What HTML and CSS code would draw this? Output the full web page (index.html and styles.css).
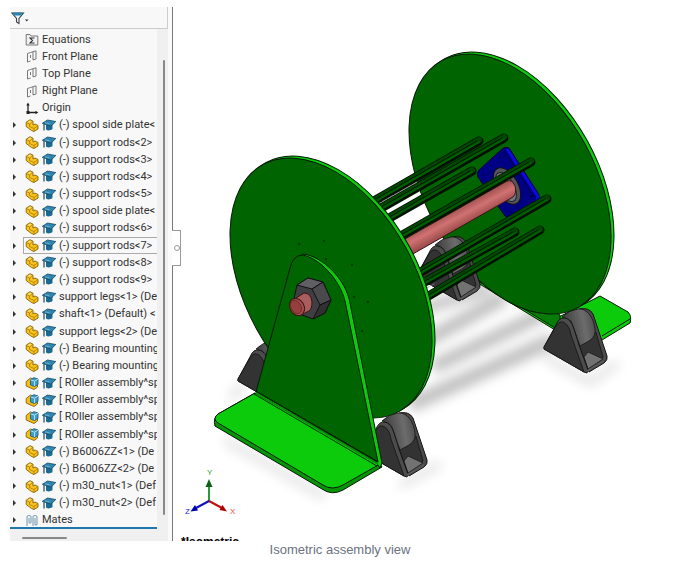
FILE: index.html
```html
<!DOCTYPE html>
<html lang="en">
<head>
<meta charset="utf-8">
<title>Isometric assembly view</title>
<link rel="stylesheet" href="styles.css">
</head>
<body>
<svg class="defs" aria-hidden="true">
  <symbol id="part" viewBox="0 0 13 13">
    <path d="M.7 3.200 4.500.7 7.500 2.200V6L9.500 5 12.500 6.500V10L8.500 12.500 6 11.500.7 7.500Z" fill="#f8c41c" stroke="#85610a" stroke-width=".9" stroke-linejoin="round"/>
    <path d="M1 3.500 4 5V7.500L8.500 9.500 12 7M8.500 9.500V12M4 5 7 2.500" fill="none" stroke="#a97a08" stroke-width=".8"/>
    <path d="M2 3.200 4.500 1.500 6.300 2.400 4 4Z" fill="#ffe066"/>
  </symbol>
  <symbol id="asm" viewBox="0 0 13 13">
    <path d="M.7 4.500 5 1 12 4v6L8.500 12.500.7 9Z" fill="#f5bd16" stroke="#85610a" stroke-width=".9" stroke-linejoin="round"/>
    <path d="M5 2.500 8.500.7 12.500 2V7.500L9 9.500 5 8Z" fill="#3e9cc6" stroke="#1b6285" stroke-width=".9"/>
    <path d="M5 2.800 9 4.200 12.500 2.200M9 4.500V9" fill="none" stroke="#d3f0fb" stroke-width=".8"/>
  </symbol>
  <symbol id="cap" viewBox="0 0 14 13">
    <path d="M4 5v5.500c2 1.500 4 1.200 6.500-.5V5Z" fill="#1d6a90"/>
    <path d="M.3 4.300 5.500 1 13.800 2.500 9 7.200Z" fill="#2f86b0" stroke="#154a64" stroke-width=".8"/>
    <path d="M2 4.800V11.500" stroke="#154a64" stroke-width="1.200"/>
    <path d="M3 3.800 7.500 4.800" stroke="#8fc7e0" stroke-width=".7"/>
  </symbol>
  <symbol id="plane" viewBox="0 0 13 13">
    <path d="M2 3.500 5 2.500M2 3.500V12L5 11M5 5V8M5 2.500 10.500.8V9L7.500 10V2" fill="none" stroke="#777" stroke-width="1"/>
  </symbol>
  <symbol id="sigma" viewBox="0 0 13 13">
    <path d="M.7 12V1.500H4.500L5.500 3H12.300V12Z" fill="#f2f2f2" stroke="#777"/>
    <path d="M9 5H4.500L7 7.500 4.500 10H9" fill="none" stroke="#333" stroke-width="1.100"/>
  </symbol>
  <symbol id="origin" viewBox="0 0 13 13">
    <path d="M2.500 2V10.500H11" fill="none" stroke="#222" stroke-width="1.300"/>
    <path d="M.8 3.500 2.500.5 4.200 3.500ZM10 8.800 12.800 10.500 10 12.200ZM1 9H4V12H1Z" fill="#222"/>
  </symbol>
  <symbol id="clips" viewBox="0 0 13 13">
    <path d="M1.500 12V3.500a2 2 0 0 1 4 0V8a1 1 0 0 1-2 0V4M7.500 12V3.500a2 2 0 0 1 4 0V10a1 1 0 0 1-2 0V4" fill="none" stroke="#7d9fb3" stroke-width="1.100"/>
  </symbol>
</svg>
<figure class="figure">
  <div class="window">
    <aside class="panel">
      <div class="filterbar">
        <button class="filter" aria-label="Filter">
          <svg viewBox="0 0 18 14" width="18" height="14"><path d="M1 2H12.500L8 7.500V12.500L5.500 11V7.500Z" fill="#e9f3f8" stroke="#444" stroke-width="1.100"/><path d="M1.500 1.500H12L10.500 4.500H3Z" fill="#2b83ae"/><path d="M14 8.500h3.500l-1.750 2z" fill="#333"/></svg>
        </button>
      </div>
      <div class="body">
        <ul class="tree">
          <li><i></i><svg><use href="#sigma"/></svg><span>Equations</span></li>
          <li><i></i><svg><use href="#plane"/></svg><span>Front Plane</span></li>
          <li><i></i><svg><use href="#plane"/></svg><span>Top Plane</span></li>
          <li><i></i><svg><use href="#plane"/></svg><span>Right Plane</span></li>
          <li><i></i><svg><use href="#origin"/></svg><span>Origin</span></li>
          <li><button aria-label="Expand"></button><svg><use href="#part"/></svg><svg><use href="#cap"/></svg><span>(-) spool side plate&lt;</span></li>
          <li><button aria-label="Expand"></button><svg><use href="#part"/></svg><svg><use href="#cap"/></svg><span>(-) support rods&lt;2&gt;</span></li>
          <li><button aria-label="Expand"></button><svg><use href="#part"/></svg><svg><use href="#cap"/></svg><span>(-) support rods&lt;3&gt;</span></li>
          <li><button aria-label="Expand"></button><svg><use href="#part"/></svg><svg><use href="#cap"/></svg><span>(-) support rods&lt;4&gt;</span></li>
          <li><button aria-label="Expand"></button><svg><use href="#part"/></svg><svg><use href="#cap"/></svg><span>(-) support rods&lt;5&gt;</span></li>
          <li><button aria-label="Expand"></button><svg><use href="#part"/></svg><svg><use href="#cap"/></svg><span>(-) spool side plate&lt;</span></li>
          <li><button aria-label="Expand"></button><svg><use href="#part"/></svg><svg><use href="#cap"/></svg><span>(-) support rods&lt;6&gt;</span></li>
          <li class="selected"><button aria-label="Expand"></button><svg><use href="#part"/></svg><svg><use href="#cap"/></svg><span>(-) support rods&lt;7&gt;</span></li>
          <li><button aria-label="Expand"></button><svg><use href="#part"/></svg><svg><use href="#cap"/></svg><span>(-) support rods&lt;8&gt;</span></li>
          <li><button aria-label="Expand"></button><svg><use href="#part"/></svg><svg><use href="#cap"/></svg><span>(-) support rods&lt;9&gt;</span></li>
          <li><button aria-label="Expand"></button><svg><use href="#part"/></svg><svg><use href="#cap"/></svg><span>support legs&lt;1&gt; (De</span></li>
          <li><button aria-label="Expand"></button><svg><use href="#part"/></svg><svg><use href="#cap"/></svg><span>shaft&lt;1&gt; (Default) &lt;</span></li>
          <li><button aria-label="Expand"></button><svg><use href="#part"/></svg><svg><use href="#cap"/></svg><span>support legs&lt;2&gt; (De</span></li>
          <li><button aria-label="Expand"></button><svg><use href="#part"/></svg><svg><use href="#cap"/></svg><span>(-) Bearing mounting</span></li>
          <li><button aria-label="Expand"></button><svg><use href="#part"/></svg><svg><use href="#cap"/></svg><span>(-) Bearing mounting</span></li>
          <li><button aria-label="Expand"></button><svg><use href="#asm"/></svg><svg><use href="#cap"/></svg><span>[ ROller assembly^sp</span></li>
          <li><button aria-label="Expand"></button><svg><use href="#asm"/></svg><svg><use href="#cap"/></svg><span>[ ROller assembly^sp</span></li>
          <li><button aria-label="Expand"></button><svg><use href="#asm"/></svg><svg><use href="#cap"/></svg><span>[ ROller assembly^sp</span></li>
          <li><button aria-label="Expand"></button><svg><use href="#asm"/></svg><svg><use href="#cap"/></svg><span>[ ROller assembly^sp</span></li>
          <li><button aria-label="Expand"></button><svg><use href="#part"/></svg><svg><use href="#cap"/></svg><span>(-) B6006ZZ&lt;1&gt; (De</span></li>
          <li><button aria-label="Expand"></button><svg><use href="#part"/></svg><svg><use href="#cap"/></svg><span>(-) B6006ZZ&lt;2&gt; (De</span></li>
          <li><button aria-label="Expand"></button><svg><use href="#part"/></svg><svg><use href="#cap"/></svg><span>(-) m30_nut&lt;1&gt; (Def</span></li>
          <li><button aria-label="Expand"></button><svg><use href="#part"/></svg><svg><use href="#cap"/></svg><span>(-) m30_nut&lt;2&gt; (Def</span></li>
          <li class="last"><button aria-label="Expand"></button><svg><use href="#clips"/></svg><span>Mates</span></li>
        </ul>
        <div class="vscroll"><div class="vthumb"></div></div>
      </div>
      <div class="hscroll"><div class="hthumb"></div></div>
      <button class="handle" aria-label="Collapse panel"></button>
    </aside>
    <svg class="scene" viewBox="173 7 497 534" role="img" aria-label="Cable spool assembly">
      <defs>
        <filter id="soft" x="-30%" y="-30%" width="160%" height="160%"><feGaussianBlur stdDeviation="6"/></filter>
        <linearGradient id="shaft" gradientUnits="userSpaceOnUse" x1="455" y1="210" x2="464" y2="227"><stop offset="0" stop-color="#a65353"/><stop offset=".4" stop-color="#d07272"/><stop offset="1" stop-color="#964646"/></linearGradient>
        <linearGradient id="roll" x1="0" x2="1" y1=".2" y2="0"><stop offset="0" stop-color="#3c3c3c"/><stop offset=".6" stop-color="#6c6c6c"/><stop offset="1" stop-color="#484848"/></linearGradient>
        <g id="roller" stroke="#141414" stroke-linejoin="round">
          <path d="M36 0 Q46 -2 50 5 L64 47 Q65 51 61 54 L46 63 L36 36Z" fill="#4a4a4a"/>
          <path d="M35 34 L53 23 L60 48 L45 60Z" fill="#333" stroke-width=".8"/>
          <path d="M41 48 L45 43 L60 50 L45 60Z" fill="#727272" stroke-width=".7"/>
          <path d="M19 8 Q26 1 35 0 C45 -1 51 10 52 20 Q53 28 46 32 L37 37 L28 12Z" fill="url(#roll)" stroke-width=".8"/>
          <path d="M1 38 L13 16 Q16 8 22 9 Q28 10 31 20 L36 36 L45 61 L44 64 L41 63 L1 40Z" fill="#4c4c4c"/>
          <path d="M1 38 L13 17 Q18 9 24 16 Q27 19 28 26 L41 63 L1 40Z" fill="#333" stroke-width=".8"/>
          <path d="M44 62 L61 52" fill="none" stroke="#5a5a5a" stroke-width="1.500"/>
        </g>
      </defs>
      <rect x="173" y="7" width="497" height="534" fill="#fff"/>

      <g filter="url(#soft)" fill="none" stroke="#c0c0c0">
        <path d="M425 341 L505 297" stroke-width="14"/>
        <path d="M433 367 L545 313" stroke-width="14"/>
        <path d="M410 405 L553 340" stroke-width="15"/>
        <path d="M425 308 L490 288" stroke-width="11"/>
        <path d="M225 440 L325 497 M400 485 L440 464 M545 357 L590 382 L618 363 M244 385 L230 398" stroke="#e2e2e2" stroke-width="8"/>
      </g>

      <g stroke="#061806" stroke-linejoin="round">
        <path d="M478 272 L553 320 L600 296 L628 312 Q632 316 630 323 L602 340 L560 333 L478 283Z" fill="#0bcb0b"/>
        <path d="M476 268 L560 315 L560 331 L478 281Z" fill="#087c08"/>
        <path d="M630 319 L602 336" fill="none"/>
        <ellipse cx="513" cy="182" rx="141" ry="85" transform="rotate(61 513 182)" fill="#0bcb0b"/>
        <ellipse cx="510" cy="184" rx="141" ry="85" transform="rotate(61 510 184)" fill="#006500"/>
      </g>

      <use href="#roller" x="543" y="309"/>
      <use href="#roller" x="416" y="237"/>

      <g stroke-linejoin="round">
        <path d="M502 149 Q505 146 509 148 L538 193 Q541 198 537 203 L512 218 Q508 220 505 216 L478 177 Q476 173 479 170Z" fill="#000085" stroke="#00002c"/>
        <path d="M507 149 L537 195 Q539 199 536 202" fill="none" stroke="#0b0be0" stroke-width="3"/>
        <path d="M504 150 L534 197" fill="none" stroke="#00002c" stroke-width=".8"/>
        <ellipse cx="507" cy="186" rx="20" ry="11" transform="rotate(61 507 186)" fill="#55555d" stroke="#111"/>
        <ellipse cx="506" cy="187" rx="16" ry="8" transform="rotate(61 506 187)" fill="#77777f" stroke="#222"/>
        <ellipse cx="505" cy="187" rx="12" ry="6" transform="rotate(61 505 187)" fill="#333"/>
        <g fill="#00003c"><circle cx="504" cy="156" r="1"/><circle cx="484" cy="175" r="1"/><circle cx="531" cy="196" r="1"/><circle cx="511" cy="212" r="1"/></g>
        <path d="M398 243 L507 181 Q512 179 515 186 Q517 193 513 197 L404 259Z" fill="url(#shaft)" stroke="#3a1515"/>
      </g>

      <g fill="none" stroke-linecap="round">
        <path d="M360 209 L479 141 M360 220 L504 138 M370 229 L472 171 M385 245 L531 162 M405 281 L547 199 M405 293 L515 232 M410 307 L540 230" stroke="#031003" stroke-width="9"/>
        <path d="M360 208 L479 140 M360 219 L504 137 M370 228 L472 170 M385 244 L531 161 M405 280 L547 198 M405 292 L515 231 M410 306 L540 229" stroke="#004700" stroke-width="6"/>
        <path d="M360 210 L479 142 M360 221 L504 139 M370 230 L472 172 M385 246 L531 163 M405 282 L547 200 M405 294 L515 233 M410 308 L540 231" stroke="#006000" stroke-width="2"/>
        <path d="M360 208 L477 141 M360 219 L502 138 M370 228 L470 171 M385 244 L529 162 M405 280 L545 199 M405 292 L513 232 M410 306 L538 230" stroke="#021a02" stroke-width="1"/>
        <path d="M376 205 L417 182 M425 289 L434 284" stroke="#8a8a8a" stroke-width=".7" stroke-dasharray="5 2"/>
      </g>

      <use href="#roller" x="237" y="341"/>
      <g stroke="#061806" stroke-linejoin="round">
        <ellipse cx="334" cy="286" rx="141" ry="85" transform="rotate(61 334 286)" fill="#0bcb0b"/>
        <ellipse cx="331" cy="288" rx="141" ry="85" transform="rotate(61 331 288)" fill="#006500"/>
      </g>
      <g fill="#004800" stroke="#002800" stroke-width=".5"><circle cx="299" cy="244" r="1"/><circle cx="324" cy="241" r="1"/><circle cx="326" cy="259" r="1"/><circle cx="352" cy="265" r="1"/><circle cx="354" cy="297" r="1"/><circle cx="368" cy="302" r="1"/><circle cx="362" cy="331" r="1"/></g>

      <use href="#roller" x="363" y="413"/>

      <g stroke="#061806" stroke-linejoin="round">
        <path d="M255 393 L218 414 Q213 418 215 426 L322 489 Q332 496 343 490 L382 467 L378 461Z" fill="#079407"/>
        <path d="M255 393 L218 414 Q212 419 218 423 L323 485 Q332 491 343 485 L380 464Z" fill="#0bcb0b"/>
        <path d="M303 254 C322 256 346 279 350 303 L382 463 L380 468 L376 462 L295 262Z" fill="#0bcb0b"/>
        <path d="M256 392 L290 268 Q293 255 303 255 C322 259 343 284 346 306 L378 462Z" fill="#006500"/>
        <path d="M256 393 L378 464" fill="none" stroke="#079407" stroke-width="2"/>
        <path d="M256 391 L377 461" fill="none" stroke-width=".9"/>
        <path d="M254 394 L377 466" fill="none" stroke-width=".9"/>
      </g>

      <g stroke="#111" stroke-linejoin="round">
        <path d="M308 278 L323 282 L331 300 L325 313 L313 319 L302 315 L294 299 L297 285Z" fill="#3f3f43"/>
        <path d="M297 285 L308 278 L323 282 L312 289Z" fill="#606064"/>
        <path d="M312 289 L323 282 L331 300 L320 305Z" fill="#4a4a4e"/>
        <path d="M320 305 L331 300 L325 313 L313 319Z" fill="#303033"/>
        <path d="M293 300 L304 293 Q311 293 312 302 Q312 309 309 311 L299 316Z" fill="#a85e5c" stroke="#3a1515"/>
        <ellipse cx="297" cy="307" rx="9" ry="7" transform="rotate(61 297 307)" fill="#a94b4b" stroke="#3a1515"/>
        <ellipse cx="296" cy="307" rx="7" ry="5" transform="rotate(61 296 307)" fill="#963f3f" stroke="#5b2020" stroke-width=".6"/>
      </g>

      <g stroke-width="2" font-family="Liberation Sans, sans-serif" font-size="8">
        <path d="M209 501V484" stroke="#2a9a3a"/><path d="M205.500 487 209 479 212.500 487Z" fill="#10601c"/>
        <path d="M209 501 222 508" stroke="#c01010"/><path d="M219.500 510 227 511.500 222.500 505Z" fill="#b00000"/>
        <path d="M209 501 196 508" stroke="#1010c0"/><path d="M198 510.500 190.500 511.500 195 505Z" fill="#0000a8"/>
        <text x="207" y="475" fill="#3a9a3a">Y</text><text x="230" y="514" fill="#f04040">X</text><text x="185" y="514" fill="#2020ee">Z</text>
      </g>
      <text x="181" y="546" font-family="Liberation Sans, sans-serif" font-weight="700" font-size="12">*Isometric</text>
    </svg>
  </div>
  <figcaption>Isometric assembly view</figcaption>
</figure>
</body>
</html>
```
FILE: styles.css
```css
* { box-sizing: border-box; }
body { margin: 0; background: #fff; font-family: Roboto, "Open Sans", sans-serif; }
.defs { position: absolute; width: 0; height: 0; }
.figure { margin: 0; padding: 7px 10px 0; }
.window { display: flex; overflow: hidden; }
.scene { flex: 1; min-width: 0; display: block; }
button { padding: 0; border: 0; background: none; }

.panel {
  position: relative;
  flex: 0 0 163px;
  display: flex;
  flex-direction: column;
  padding-right: 4px;
  border-right: 1px solid #777;
  background: #fafafa;
}
.filterbar {
  flex: 0 0 22px;
  display: flex;
  align-items: center;
  border-right: 1px solid #ccc;
  border-bottom: 1px solid #ccc;
  background: #f8f8f8;
}
.filter { display: flex; margin-left: 1px; }
.body { flex: 1; display: flex; min-height: 0; }
.tree {
  flex: 1;
  min-width: 0;
  display: grid;
  grid-auto-rows: 1fr;
  margin: 0;
  padding: 2px 0 0;
  list-style: none;
  background: #f8f8f8;
  font-size: 11px;
  line-height: 16px;
  color: #333;
}
.tree li {
  display: flex;
  align-items: center;
  gap: 3px;
  min-height: 0;
  overflow: hidden;
  white-space: nowrap;
}
.tree svg { flex: 0 0 14px; height: 13px; }
.tree span { overflow: hidden; }
.tree i, .tree button { flex: 0 0 12px; height: 16px; }
.tree button::before {
  content: "";
  display: block;
  width: 0;
  margin-left: 3px;
  border: solid transparent;
  border-width: 3px 0 3px 3px;
  border-left-color: #333;
}
.tree .selected {
  background: linear-gradient(#aaa, #aaa) 13px 0 / 1px 100% no-repeat,
    linear-gradient(#aaa, #aaa) 13px 0 / 100% 1px no-repeat,
    linear-gradient(#aaa, #aaa) 13px 100% / 100% 1px no-repeat;
}
.tree .last { box-shadow: inset 0 -2px #1f78ab; }
.vscroll { flex: 0 0 11px; padding: 31px 3px 14px 6px; background: #f0f0f0; }
.vthumb { height: 100%; border-radius: 1px; background: #888; }
.hscroll { flex: 0 0 12px; padding: 8px 0 0 12px; background: #f0f0f0; }
.hthumb { width: 45px; height: 2px; border-radius: 1px; background: #888; }
.handle {
  position: absolute;
  top: 223px;
  left: 100%;
  width: 9px;
  height: 36px;
  border: 1px solid #999;
  border-left: 0;
  background: #fff;
}
.handle::before {
  content: "";
  display: block;
  width: 4px;
  height: 4px;
  margin-left: 2px;
  border: 1px solid #999;
  border-radius: 50%;
}
figcaption {
  padding-top: 1px;
  text-align: center;
  font: 13px/16px "Liberation Sans", Arial, sans-serif;
  color: #6b7280;
}
```
